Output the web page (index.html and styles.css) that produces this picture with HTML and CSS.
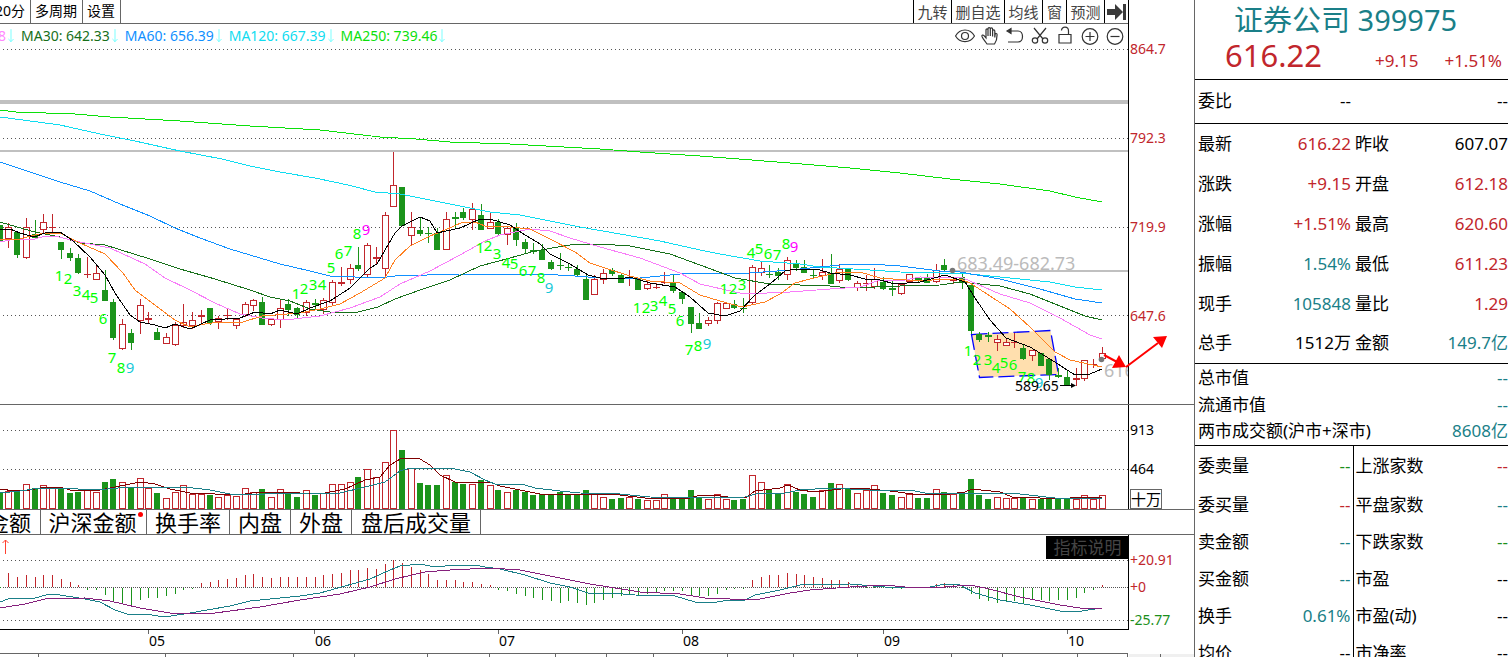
FILE: index.html
```html
<!DOCTYPE html>
<html lang="zh-CN">
<head>
<meta charset="utf-8">
<title>证券公司 399975</title>
<link rel="stylesheet" href="styles.css">
</head>
<body>
<div class="terminal">
  <main class="charts">
    <section class="pane">
      <div class="plot">
        <nav class="toolbar">
          <button class="period period-first">20分</button>
          <button class="period period-multi">多周期</button>
          <button class="period period-set">设置</button>
          <span class="spacer"></span>
          <button class="tool tool-2">九转</button>
          <button class="tool tool-3">删自选</button>
          <button class="tool tool-2">均线</button>
          <button class="tool tool-1">窗</button>
          <button class="tool tool-2">预测</button>
          <button class="tool tool-1" aria-label="收起">
            <svg width="20" height="18" viewBox="0 0 20 18"><path d="M0 6h8V1l8 8-8 8v-5H0zM16 1h3v16h-3z" fill="#3a3a3a"/></svg>
          </button>
        </nav>
        <div class="legend">
          <span class="ma ma20">8<svg class="down" viewBox="0 0 7 16"><path d="M3.500 0v15M0.500 11.500l3 3 3-3"/></svg></span>
          <span class="ma ma30">MA30: 642.33<svg class="down" viewBox="0 0 7 16"><path d="M3.500 0v15M0.500 11.500l3 3 3-3"/></svg></span>
          <span class="ma ma60">MA60: 656.39<svg class="down" viewBox="0 0 7 16"><path d="M3.500 0v15M0.500 11.500l3 3 3-3"/></svg></span>
          <span class="ma ma120">MA120: 667.39<svg class="down" viewBox="0 0 7 16"><path d="M3.500 0v15M0.500 11.500l3 3 3-3"/></svg></span>
          <span class="ma ma250">MA250: 739.46<svg class="down" viewBox="0 0 7 16"><path d="M3.500 0v15M0.500 11.500l3 3 3-3"/></svg></span>
          <span class="spacer"></span>
          <button class="icon" aria-label="显示"><svg viewBox="0 0 20 20"><path d="M0.500 10C5 2 15 2 19.500 10 15 17.500 5 17.500 .5 10z"/><circle cx="10" cy="10" r="3.500"/></svg></button>
          <button class="icon" aria-label="拖动"><svg viewBox="0 0 20 20"><path d="M7 18C5 15 3 13 2 10.500c-.5-1.500 1-2 2-.8L6 12V4c0-1.600 2-1.600 2 0v6V2.800c0-1.600 2.300-1.600 2.300 0V10 3c0-1.600 2.300-1.600 2.300 0v7.500V5c0-1.600 2.200-1.600 2.200 0v6.500l.3-3c.2-1.500 2-1.300 2 .2 0 3.500-.6 6.500-2.600 9.300z"/></svg></button>
          <button class="icon" aria-label="撤销"><svg viewBox="0 0 20 20"><path d="M4 5h9c6 0 6 11 0 11H3"/><path d="M2 5l4-2.500v5z" fill="#333"/></svg></button>
          <button class="icon" aria-label="剪切"><svg viewBox="0 0 20 20"><path d="M4 2l9 11M16 2L7 13"/><circle cx="5" cy="14.500" r="2.700"/><circle cx="15" cy="14.500" r="2.700"/></svg></button>
          <button class="icon" aria-label="解锁"><svg viewBox="0 0 20 20"><path d="M4 8.500h12v8.500H4zM13.500 8V5c0-5-7-5-7-.5"/></svg></button>
          <button class="icon" aria-label="放大"><svg viewBox="0 0 20 20"><circle cx="10" cy="10.500" r="7.800"/><path d="M5.500 10.500h9M10 6v9"/></svg></button>
          <button class="icon" aria-label="缩小"><svg viewBox="0 0 20 20"><circle cx="10" cy="10.500" r="7.800"/><path d="M5.500 10.500h9"/></svg></button>
        </div>
        <svg class="canvas canvas-price"><g id="price" transform="translate(0 -48)"></g></svg>
      </div>
      <div class="axis axis-price"><span>864.7</span><span>792.3</span><span>719.9</span><span>647.6</span></div>
    </section>

    <section class="pane">
      <div class="plot"><svg class="canvas canvas-volume"><g id="volume" transform="translate(0 -405)"></g></svg></div>
      <div class="axis axis-volume"><span>913</span><span>464</span><span class="unit">十万</span></div>
    </section>

    <nav class="metrics">
      <button class="metric metric-first">金额</button>
      <button class="metric metric-4">沪深金额<i class="dot"></i></button>
      <button class="metric metric-3">换手率</button>
      <button class="metric">内盘</button>
      <button class="metric">外盘</button>
      <button class="metric metric-5">盘后成交量</button>
    </nav>

    <section class="pane pane-macd">
      <div class="plot">
        <svg class="canvas canvas-macd"><g id="macd" transform="translate(0 -535)"></g></svg>
        <button class="explain">指标说明</button>
      </div>
      <div class="axis axis-macd"><span class="up">+20.91</span><span class="up zero">+0</span><span class="fall">-25.77</span></div>
    </section>

    <svg class="dates"><g id="dates" transform="translate(0 -629)"></g></svg>
  </main>

  <aside class="quote">
    <header class="head">
      <h1 class="name">证券公司 399975</h1>
      <div class="prices"><strong class="last">616.22</strong><span class="change">+9.15</span><span class="change">+1.51%</span></div>
    </header>
    <table class="grid ratio">
      <tr><th>委比</th><td>--</td><th></th><td>--</td></tr>
    </table>
    <table class="grid basics">
      <tr><th>最新</th><td class="up">616.22</td><th>昨收</th><td>607.07</td></tr>
      <tr><th>涨跌</th><td class="up">+9.15</td><th>开盘</th><td class="up">612.18</td></tr>
      <tr><th>涨幅</th><td class="up">+1.51%</td><th>最高</th><td class="up">620.60</td></tr>
      <tr><th>振幅</th><td class="teal">1.54%</td><th>最低</th><td class="up">611.23</td></tr>
      <tr><th>现手</th><td class="teal">105848</td><th>量比</th><td class="up">1.29</td></tr>
      <tr><th>总手</th><td>1512万</td><th>金额</th><td class="teal">149.7亿</td></tr>
    </table>
    <table class="totals">
      <tr><th>总市值</th><td>--</td></tr>
      <tr><th>流通市值</th><td>--</td></tr>
      <tr><th>两市成交额(沪市+深市)</th><td>8608亿</td></tr>
    </table>
    <table class="grid breadth">
      <tr><th>委卖量</th><td class="fall">--</td><th>上涨家数</th><td class="up">--</td></tr>
      <tr><th>委买量</th><td class="up">--</td><th>平盘家数</th><td class="teal">--</td></tr>
      <tr><th>卖金额</th><td class="teal">--</td><th>下跌家数</th><td class="fall">--</td></tr>
      <tr><th>买金额</th><td class="teal">--</td><th>市盈</th><td>--</td></tr>
      <tr><th>换手</th><td class="teal">0.61%</td><th>市盈(动)</th><td>--</td></tr>
      <tr><th>均价</th><td>--</td><th>市净率</th><td>--</td></tr>
    </table>
  </aside>
</div>
<script src="chart.js"></script>
</body>
</html>
```
FILE: styles.css
```css
* { box-sizing: border-box; }

body {
  margin: 0;
  height: 100vh;
  overflow: hidden;
  background: #fff;
  color: #000;
  font-family: "Noto Sans", "Noto Sans CJK SC", sans-serif;
  font-size: 14px;
}

button {
  margin: 0;
  padding: 0;
  border: 0;
  background: none;
  color: inherit;
  font: inherit;
  white-space: nowrap;
}

.up { color: #c1262c; }
.fall { color: #1b8f1b; }
.teal { color: #1a7f88; }
.spacer { flex: 1; }

.terminal { display: flex; height: 100%; }
.charts { flex: 1; min-width: 0; }
.pane { display: grid; grid-template-columns: minmax(0, 1fr) 66px; border-bottom: 1px solid #666; }
.plot { position: relative; min-width: 0; }
.canvas { display: block; width: 100%; overflow: visible; }
.canvas-price { height: 356px; }
.canvas-volume { height: 104px; }
.canvas-macd { height: 93px; }
.pane-macd { border-bottom: 0; }
.pane-macd .plot { border-bottom: 1px solid #000; }

.toolbar { display: flex; height: 24px; border-bottom: 1px solid #666; overflow: hidden; }
.period { display: flex; justify-content: flex-end; line-height: 22px; border-right: 1px solid #666; padding-right: 5px; }
.period-first { width: 31px; }
.period-multi { width: 52px; }
.period-set { width: 38px; }
.tool { display: flex; justify-content: center; align-items: center; border-left: 1px solid #000; color: #444; font-size: 15px; line-height: 22px; }
.tool-1 { width: 24px; }
.tool-2 { width: 38px; }
.tool-3 { width: 53px; }

.legend { display: flex; align-items: center; height: 24px; overflow: hidden; line-height: 24px; padding-right: 1px; }
.ma { display: flex; align-items: center; gap: 2px; margin-right: 7px; }
.down { width: 6px; height: 16px; fill: none; stroke: #6ff; }
.ma20 { color: #f8f; margin-left: -2px; }
.ma30 { color: #17701a; }
.ma60 { color: #1090ff; }
.ma120 { color: #10dcf0; }
.ma250 { color: #0be00b; }
.icon { display: flex; justify-content: center; align-items: center; width: 25px; height: 24px; }
.icon svg { width: 20px; height: 20px; fill: none; stroke: #333; stroke-width: 1.2; }

.axis { display: flex; flex-direction: column; align-items: flex-start; border-left: 1px solid #000; padding-left: 1px; line-height: 20px; }
.axis-price { gap: 69px; padding-top: 39px; color: #c1262c; }
.axis-volume { padding-top: 15px; gap: 19px; }
.unit { border: 1px solid #666; width: 32px; height: 20px; line-height: 18px; margin-top: -9px; font-size: 15px; }
.axis-macd { padding-top: 15px; }
.zero { padding: 7px 0 13px; }

.metrics { display: flex; height: 25px; border-bottom: 1px solid #666; overflow: hidden; }
.metric { position: relative; width: 61px; border-right: 1px solid #666; font-size: 22px; line-height: 24px; display: flex; justify-content: center; align-items: center; }
.metric-first { width: 41px; justify-content: flex-end; padding-right: 9px; }
.metric-4 { width: 106px; padding-right: 2px; }
.metric-3 { width: 83px; }
.metric-5 { width: 129px; }
.dot { position: absolute; right: 3px; top: 2px; width: 5px; height: 5px; border-radius: 50%; background: #f00; }

.explain { position: absolute; right: 0; top: 2px; width: 81px; height: 21px; background: #000; color: #444; font-size: 17px; line-height: 21px; outline: 1px solid #000; }

.dates { display: block; width: 100%; height: 28px; }
.candle-up { fill: #fff; stroke: #c1262c; }
.text-mid { text-anchor: middle; font-size: 15px; }
.text-level { font-size: 18px; fill: #bbb; }

.quote { width: 314px; border-left: 1px solid #666; font-size: 17px; }
.head { height: 80px; border-bottom: 1px solid #000; }
.name { margin: 0; padding-left: 39px; font-size: 29px; font-weight: 400; line-height: 40px; color: #1a7f88; white-space: nowrap; }
.prices { display: flex; align-items: baseline; line-height: 30px; color: #c1262c; padding: 0 6px 0 30px; }
.last { flex: 1; font-size: 31px; font-weight: 400; }
.change { margin-left: 26px; }

table { width: 100%; border-collapse: collapse; table-layout: fixed; }
th, td { padding: 0; font-weight: 400; white-space: nowrap; line-height: 24px; }
th { text-align: left; padding-left: 3px; }
td { text-align: right; }
.grid td:nth-child(2) { padding-right: 2px; }
.grid th:nth-child(1), .grid td:nth-child(2) { width: 79px; }
.grid th:nth-child(3) { padding-left: 2px; }
.ratio { border-bottom: 1px solid #000; }
.ratio tr { height: 43px; }
.basics { border-bottom: 1px solid #000; }
.basics tr { height: 40px; }
.totals { border-bottom: 1px solid #000; }
.totals tr { height: 27px; }
.totals th { width: 220px; }
.totals td { color: #1a7f88; }
.breadth tr { height: 37px; }
.breadth tr:first-child { height: 41px; }
.breadth td:nth-child(2) { border-right: 1px solid #000; }
```
FILE: chart.js
```js
const RED = '#c1262c', GREEN = '#1b941b', GREY = '#666';
const x = i => Math.round(8.747 * i - 0.3);

// direction, body top, body bottom, wick top, wick bottom, volume top, histogram end
const bars = `
g 225 240 225 240 492 587;r 227 238 223 247 491 573;g 232 254 232 257 491 577;r 227 257 218 258 484 575;g 234 237 220 238 488 577
r 222 229 214 233 485 575;r 227 228 214 232 487 575;g 242 249 242 258 488 579;g 253 257 248 260 493 582;g 258 272 254 273 492 585
r 274 275 257 277 490 590;r 273 279 264 279 492 590;g 290 300 270 300 482 595;g 302 337 299 339 479 601;r 324 348 319 349 482 603
g 333 342 329 349 487 605;r 305 320 299 333 478 600;r 318 320 312 323 488 598;g 332 339 328 339 493 598;r 337 343 333 343 498 596
r 325 344 322 345 492 594;r 322 325 304 327 485 590;r 320 325 312 328 494 588;r 315 317 310 322 494 583;g 308 322 308 324 495 582
r 318 321 316 328 497 580;r 315 316 309 319 495 579;r 319 325 319 328 496 578;r 304 314 302 316 488 575;r 300 305 299 310 492 574
g 302 324 297 324 489 577;r 319 324 319 325 497 578;r 308 319 299 327 489 577;g 304 309 299 315 493 577;g 308 314 307 317 497 577
r 302 312 300 315 490 577;g 303 305 299 309 495 577;r 300 309 298 313 493 575;r 282 302 280 304 484 574;r 282 284 267 285 484 573
r 268 279 264 283 482 570;g 265 268 247 270 477 570;r 245 274 243 277 469 568;r 257 259 247 264 477 569;r 215 268 212 277 462 564
r 185 206 152 206 430 560;g 187 225 187 225 450 563;r 227 235 212 245 468 567;g 230 233 218 235 483 570;g 233 234 227 242 485 574
g 233 249 228 249 485 580;r 219 249 212 249 475 580;g 217 219 212 227 482 580;g 212 217 208 219 484 582;r 209 219 203 229 484 582
g 215 229 204 229 480 584;r 222 228 213 228 485 585;g 222 233 219 235 490 590;r 228 234 228 244 492 591;g 228 239 223 245 490 594
g 242 248 239 253 492 596;g 250 252 243 253 495 598;g 250 259 244 259 494 600;g 262 268 260 269 494 601;g 265 266 253 269 492 603
g 267 268 263 270 494 601;g 269 274 265 275 494 603;g 279 299 275 299 490 605;r 279 294 275 294 494 603;r 273 279 269 283 497 600
g 270 273 268 275 499 598;g 275 282 273 282 498 596;r 277 278 270 285 497 594;g 278 289 278 289 499 595;r 284 288 281 289 500 594
r 287 288 283 288 500 593;r 282 283 272 283 494 591;g 282 290 275 292 498 591;g 292 298 292 303 498 591;g 307 323 307 332 490 595
g 323 328 313 328 497 596;r 320 323 317 325 499 596;r 303 320 302 323 494 594;r 303 308 303 308 499 590;g 304 307 300 308 500 589
g 308 309 298 312 499 588;r 267 302 265 304 475 580;r 268 272 262 275 482 577;g 274 275 265 277 489 575;g 272 275 268 279 493 575
r 260 274 257 279 484 573;g 264 267 260 270 492 574;g 267 272 260 272 494 575;g 275 276 269 277 497 577;r 272 275 259 279 490 578
g 273 283 254 283 483 580;r 269 280 264 282 484 580;g 269 279 269 280 489 582;r 283 287 281 290 493 584;r 283 284 275 290 490 587
r 279 286 268 288 485 587;g 282 288 277 289 493 587;g 288 290 280 295 495 589;r 284 293 284 294 497 589;r 274 281 274 281 494 587
g 278 280 278 282 498 587;g 278 282 274 282 498 587;r 270 281 264 282 489 584;g 265 269 259 270 492 583;r 280 281 277 283 494 584
g 277 281 272 288 492 587;g 285 330 283 333 479 594;g 334 339 332 341 495 599;g 335 337 332 341 499 601;r 339 342 335 350 497 603
r 342 345 338 345 498 602;r 342 343 333 347 498 601;g 348 358 344 359 498 603;r 350 355 350 360 499 600;g 353 365 353 365 499 600
g 359 374 359 379 498 601;g 375 377 368 377 499 600;g 377 384 371 385 499 600;r 378 380 368 385 499 598;r 360 378 360 380 495 593
r 364 365 359 367 499 590;r 353 358 347 360 495 585`
  .trim().split(/[;\n]/).map(s => { const [d, ...n] = s.split(' '); return [d, ...n.map(Number)]; });

const line = (points, color, w = 1) =>
  `<polyline points="${points}" fill="none" stroke="${color}" stroke-width="${w}" shape-rendering="crispEdges"/>`;
const rule = (y, color, h) => `<rect y="${y}" width="100%" height="${h}" fill="${color}"/>`;
const dotted = y => `<line x1="3" x2="100%" y1="${y + .5}" y2="${y + .5}" stroke="#555" stroke-dasharray="1 3" shape-rendering="crispEdges"/>`;
const rect = (left, top, w, h, up) => up
  ? `<rect x="${left + .5}" y="${top + .5}" width="${w - 1}" height="${Math.max(h - 1, 1)}" class="candle-up"/>`
  : `<rect x="${left}" y="${top}" width="${w}" height="${h}" fill="${GREEN}"/>`;
const stem = (cx, a, b, color) => `<rect x="${cx}" y="${a}" width="1" height="${Math.max(b - a, 1)}" fill="${color}"/>`;
const tick = (cx, a, b) => stem(cx, a, b, GREY);

const candles = bars.map(([d, t, b, wt, wb], i) => {
  const up = d === 'r', c = up ? RED : GREEN;
  const body = b - t <= 2
    ? `<rect x="${x(i) - 3}" y="${t}" width="7" height="${b - t}" fill="${c}"/>`
    : rect(x(i) - 3, t, up ? 7 : 6, b - t + 1, up);
  return stem(x(i), wt, wb + 1, c) + body;
}).join('');

// sequential counts: digit, centre x, baseline
const counts = `1 59 281,2 68 284,3 77 296,4 86 300,5 94 303,6 103 324,7 112 363,8 121 373,c 130 373
1 296 299,2 304 294,3 313 290,4 322 290,5 331 273,6 339 259,7 348 256,8 357 239,m 366 235
1 480 253,2 488 251,3 497 259,4 506 268,5 514 269,6 523 276,7 532 276,8 541 283,c 549 293
1 637 313,2 646 313,3 654 311,4 663 306,5 672 314,6 680 326,7 689 355,8 698 351,c 707 349
1 724 294,2 733 294,3 742 290,4 751 258,5 759 254,6 768 259,7 777 260,8 786 249,m 794 252
1 968 356,2 977 365,3 988 365,4 996 373,5 1004 368,6 1013 370,7 1022 382,8 1031 383,c 1039 388`
  .split(/[,\n]/).map(s => {
    const [k, cx, y] = s.split(' ');
    const color = { c: '#18c8d8', m: '#f0f' }[k] || '#0f0';
    return `<text class="text-mid" x="${cx}" y="${y}" fill="${color}">${k > '9' ? 9 : k}</text>`;
  }).join('');

document.getElementById('price').innerHTML =
  [49, 138, 227, 315].map(dotted).join('') + rule(100, '#c0c0c0', 4) + rule(150, '#c0c0c0', 2) +
  `<path d="M971.500 334.500L1050.500 330.500 1058.500 374.500 979.500 377.500z" fill="#ffdfae" stroke="#00f" stroke-width="1.300" stroke-dasharray="16 5"/>
   <path d="M952 271H1128" stroke="#c0c0c0" stroke-width="2"/>
   <text class="text-level" x="957" y="270">683.49-682.73</text>
   <svg x="1104" y="355" width="24" height="30"><text class="text-level" x="0" y="22">616</text></svg>` +
  candles +
  line('0,110 16,112 75,114 110,117 180,121 250,126 320,130 380,137 416,139 450,142 510,144 600,149 640,152 700,156 790,163 850,168 900,173 950,179 1000,184 1050,191 1075,197 1102,202', '#0be00b') +
  line('0,117 30,121 60,125 100,134 135,141 180,151 222,159 250,166 280,172 315,178 348,185 375,192 400,194 430,200 460,206 480,210 490,212 520,215 550,221 580,227 620,234 660,241 700,250 720,254 760,261 800,264 820,267 870,270 900,272 940,273 960,273 1000,277 1050,282 1075,287 1102,290', '#10dcf0') +
  line('0,162 30,172 60,182 90,191 120,204 150,216 175,228 200,238 230,249 250,255 280,264 310,271 330,276 380,278 395,276 460,274 540,274 575,276 600,278 640,278 680,274 750,273 790,270 840,265 870,264 900,266 940,271 960,272 1000,279 1040,289 1075,299 1102,303', '#1090ff') +
  line('0,222 17,227 35,232 60,237 80,243 105,245 150,259 180,269 215,279 250,290 270,297 290,301 310,309 330,312 358,312 378,307 395,299 420,290 450,280 480,266 510,258 535,251 570,245 600,244 630,246 670,254 700,265 735,278 770,284 830,286 850,288 900,286 940,285 960,282 980,284 1000,286 1030,294 1060,306 1085,316 1102,320', '#17701a') +
  line('0,242 10,240 35,239 45,236 55,236 75,241 110,248 145,264 165,278 190,290 215,303 240,314 262,318 285,320 320,316 350,308 380,297 400,284 430,271 460,255 485,241 500,235 530,229 550,231 570,238 600,247 640,258 680,273 700,284 735,292 745,294 790,292 830,289 860,287 880,280 900,281 920,277 963,278 1000,294 1030,303 1060,318 1090,335 1102,339', '#f87cf8') +
  line('0,240 20,239 35,235 45,233 60,233 80,243 105,254 123,273 135,290 160,309 175,320 190,327 205,324 220,322 240,323 262,316 300,313 320,309 340,304 360,293 385,278 395,260 410,246 430,236 445,230 463,222 475,222 485,226 500,226 530,229 550,239 575,252 590,263 605,268 630,276 650,281 680,283 700,295 720,301 742,307 765,302 780,294 795,283 810,279 835,273 860,272 880,278 920,281 945,279 960,279 970,283 990,296 1010,309 1030,327 1055,352 1070,360 1102,367', '#ff8020') +
  line('0,230 10,229 20,233 34,237 45,233 60,232 72,240 90,257 105,275 115,293 130,315 140,322 155,325 165,328 175,324 190,329 210,320 240,318 255,312 270,314 280,310 297,314 310,308 330,301 350,288 370,268 377,264 385,250 395,233 402,226 420,217 430,221 437,233 460,228 480,219 490,219 510,225 522,233 540,244 550,254 570,264 588,275 600,278 620,279 630,277 650,283 675,287 690,297 708,313 725,316 740,311 755,295 770,284 785,271 795,269 820,270 830,273 850,275 865,279 880,280 895,284 920,282 945,275 965,282 975,298 990,320 1006,338 1030,347 1050,359 1075,375 1090,374 1102,369', '#000') +
  counts +
  `<circle cx="952.500" cy="270.500" r="2.800" fill="#777"/><circle cx="1101.500" cy="359.500" r="2.800" fill="#777"/>
   <text x="1015" y="391" font-size="14">589.65</text>
   <path d="M1060 385.500h12" stroke="#000"/><path d="M1076 385.500l-5-2.500v5z"/>
   <path d="M1104 355l15 8M1126 367l32-24" stroke="#f00" stroke-width="2"/>
   <path d="M1126 367l-7-12-7 13zM1167 336l-14 1 9 11z" fill="#f00"/>`;

document.getElementById('volume').innerHTML = [430, 469].map(dotted).join('') +
  bars.map((b, i) => rect(x(i) - 3, b[5], b[0] === 'r' ? 7 : 6, 509 - b[5], b[0] === 'r')).join('') +
  line('0,489 15,491 30,490 40,488 60,487 70,490 100,490 110,488 125,485 140,482 155,484 170,489 190,493 215,494 225,495 245,494 260,492 290,492 310,494 325,493 345,489 365,480 380,477 390,465 402,458 420,459 430,465 440,475 455,482 465,483 490,482 500,486 520,490 540,494 600,494 620,495 645,498 690,498 700,495 720,496 735,498 747,497 755,491 780,488 788,485 800,490 815,492 850,488 870,489 890,491 920,495 950,494 965,492 972,489 1000,492 1012,497 1040,498 1070,498 1102,497', '#800000') +
  line('0,493 20,491 40,488 60,488 95,490 130,487 185,487 210,490 230,494 265,494 310,493 340,493 365,487 385,482 400,471 410,468 450,468 470,472 485,480 495,484 525,485 535,488 560,491 580,493 620,494 650,497 690,498 745,497 760,493 785,493 800,490 830,488 870,490 910,490 925,493 960,493 1020,494 1055,498 1102,498', '#1a7f88');

document.getElementById('macd').innerHTML = [560, 620].map(dotted).join('') +
  '<line x1="3" x2="100%" y1="587.500" y2="587.500" stroke="#555" stroke-dasharray="1 1" shape-rendering="crispEdges"/>' +
  bars.map((b, i) => stem(x(i), Math.min(b[6], 588), Math.max(b[6], 587), b[6] < 587 ? RED : GREEN)).join('') +
  line('0,602 8,599 35,598 50,594 60,595 85,599 100,602 115,610 130,615 145,614 165,617 190,613 230,606 250,601 300,596 320,593 345,586 370,579 390,570 400,566 420,564 435,567 455,565 475,565 485,567 500,569 525,575 550,583 570,587 588,593 610,593 635,595 675,596 695,602 710,603 730,600 745,600 755,595 780,590 800,585 850,584 885,587 930,587 945,584 960,585 975,593 1000,600 1030,605 1060,611 1075,612 1102,608', '#1a7f88') +
  line('0,608 25,604 45,599 85,598 110,601 140,608 170,613 215,613 260,607 300,600 340,594 370,587 395,579 425,572 450,570 490,568 520,570 550,576 590,584 640,592 680,594 705,598 730,599 760,599 790,593 810,590 850,587 885,585 905,587 945,587 970,585 985,588 1020,597 1060,605 1080,608 1102,608', '#85207c') +
  '<path d="M5.500 554v-14M2.500 543l3-3 3 3" fill="none" stroke="#ff4030"/>';

document.getElementById('dates').innerHTML =
  [['05', 148], ['06', 314], ['07', 498], ['08', 682], ['09', 883], ['10', 1067]]
    .map(([t, cx]) => tick(cx, 629, 633) + `<text x="${cx + 1}" y="645" font-size="14">${t}</text>`).join('') +
  `<rect y="652" width="1128" height="1" fill="${GREY}"/><rect x="1129" y="653" width="65" height="5" fill="#f0f0f0"/>` +
  [38, 165, 293, 354, 427, 489, 555, 606, 653, 727, 793, 857, 951, 1002, 1077, 1127, 1160].map(c => tick(c, 653, 657)).join('');
```
